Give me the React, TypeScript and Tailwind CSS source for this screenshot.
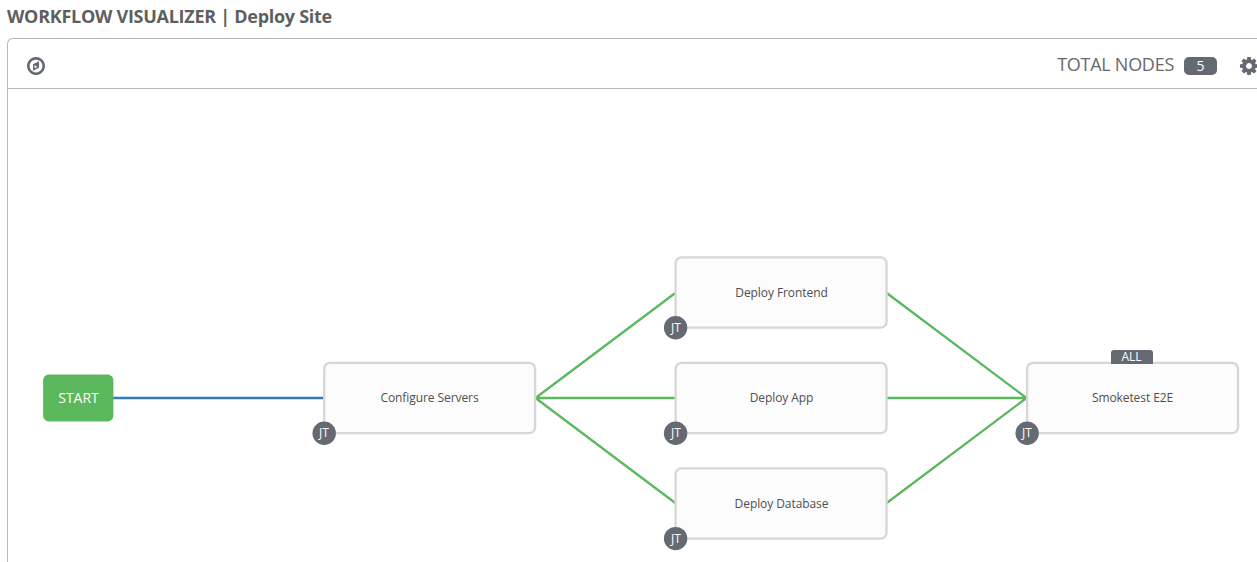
import React from "react";

type JobNode = { label: string; place: string; x: number; y: number; all?: boolean };

// x and y fine-tune the outline within its whole-pixel box
const nodes: JobNode[] = [
  { label: "Configure Servers", place: "left-[315px] top-[273px]", x: 1.2, y: 0.9 },
  { label: "Deploy Frontend", place: "left-[667px] top-[168px]", x: 0.6, y: 0.4 },
  { label: "Deploy App", place: "left-[667px] top-[273px]", x: 0.6, y: 0.9 },
  { label: "Deploy Database", place: "left-[667px] top-[379px]", x: 0.6, y: 0.3 },
  { label: "Smoketest E2E", place: "left-[1018px] top-[273px]", x: 1.1, y: 0.9, all: true },
];

function CompassIcon() {
  return (
    <svg viewBox="0 -1408 1536 1536" className="h-[18px] w-[18px]" fill="currentColor">
      <path
        transform="scale(1,-1)"
        fillRule="evenodd"
        d="M640 448l256 128l-256 128v-256zM1024 1039v-542l-512 -256v542zM1312 640q0 148 -73 273t-198 198t-273 73t-273 -73t-198 -198t-73 -273t73 -273t198 -198t273 -73t273 73t198 198t73 273zM1536 640q0 -209 -103 -385.5t-279.5 -279.5t-385.5 -103t-385.5 103t-279.5 279.5t-103 385.5t103 385.5t279.5 279.5t385.5 103t385.5 -103t279.5 -279.5t103 -385.5z"
      />
    </svg>
  );
}

function CogIcon() {
  return (
    <svg viewBox="0 -1408 1536 1536" className="h-[18px] w-[18px] shrink-0" fill="currentColor">
      <path
        transform="scale(1,-1)"
        fillRule="evenodd"
        d="M1024 640q0 106 -75 181t-181 75t-181 -75t-75 -181t75 -181t181 -75t181 75t75 181zM1536 749v-222q0 -12 -8 -23t-20 -13l-185 -28q-19 -54 -39 -91q35 -50 107 -138q10 -12 10 -25t-9 -23q-27 -37 -99 -108t-94 -71q-12 0 -26 9l-138 108q-44 -23 -91 -38q-16 -136 -29 -186q-7 -28 -36 -28h-222q-14 0 -24.5 8.5t-11.5 21.5l-28 184q-49 16 -90 37l-141 -107q-10 -9 -25 -9q-14 0 -25 11q-126 114 -165 168q-7 10 -7 23q0 12 8 23q15 21 51 66.5t54 70.5q-27 50 -41 99l-183 27q-13 2 -21 12.5t-8 23.5v222q0 12 8 23t19 13l186 28q14 46 39 92q-40 57 -107 138q-10 12 -10 24q0 10 9 23q26 36 98.5 107.5t94.5 71.5q13 0 26 -10l138 -107q44 23 91 38q16 136 29 186q7 28 36 28h222q14 0 24.5 -8.5t11.5 -21.5l28 -184q49 -16 90 -37l142 107q9 9 24 9q13 0 25 -10q129 -119 165 -170q7 -8 7 -22q0 -12 -8 -23q-15 -21 -51 -66.5t-54 -70.5q26 -50 41 -98l183 -28q13 -2 21 -12.5t8 -23.5z"
      />
    </svg>
  );
}

function Links() {
  return (
    <svg className="absolute left-0 top-0 h-full w-full" fill="none" strokeWidth="2.34">
      <path stroke="#337ab7" d="M105 309H316" />
      <path
        stroke="#5cb85c"
        d="M527.5 309L667.3 204M527.5 309H667.3M527.5 309L667.3 414M878.7 204L1018.5 309M878.7 309H1018.5M878.7 414L1018.5 309"
      />
    </svg>
  );
}

function Node({ label, place, x, y, all }: JobNode) {
  return (
    <div className={`absolute h-[72px] w-[213px] ${place}`}>
      <svg className="absolute inset-0 h-full w-full overflow-visible">
        <rect x={x} y={y} width="210.9" height="70.3" rx="5.8" fill="#fcfcfc" stroke="#d7d7d7" strokeWidth="2.34" />
        <circle cx={x} cy={y + 70.3} r="11.7" fill="#646972" />
      </svg>
      <div className="relative flex h-full items-center justify-center text-[12px] leading-[16px] tracking-[-0.08px] text-[#4f4f4f]">
        {label}
      </div>
      <div className="absolute -left-[11px] top-[59px] flex h-[24px] w-[24px] items-center justify-center text-[12px] leading-none text-white">
        JT
      </div>
      {all && (
        <div className="absolute left-[85px] -top-[12px] flex h-[14px] w-[42px] items-center justify-center rounded-t-[3px] bg-[#646972] pr-px text-[12px] leading-none text-white">
          ALL
        </div>
      )}
    </div>
  );
}

export default function App() {
  return (
    <div className="flex h-[562px] w-full flex-col overflow-hidden bg-white pl-[7px] font-['Open_Sans','Noto_Sans',sans-serif] text-[#646972]">
      <h1 className="h-[38px] shrink-0 pt-[4px] text-[18px] font-bold leading-[25px] tracking-[-0.28px] text-[#5f5f5f]">
        WORKFLOW VISUALIZER | Deploy Site
      </h1>
      <main className="flex min-h-0 flex-1 flex-col rounded-tl-[6px] border-l border-t border-[#b7b7b7]">
        <header className="flex h-[50px] shrink-0 items-center justify-between overflow-hidden border-b border-[#b7b7b7] pl-[19px] pt-[4px]">
          <CompassIcon />
          <div className="-mr-[1px] flex items-center">
            <span className="-mt-[2px] text-[18px] leading-[25px] tracking-[-0.27px] text-[#686868]">TOTAL NODES</span>
            <span className="ml-[10px] mr-[23px] flex h-[18px] w-[33px] items-center justify-center rounded-[5px] bg-[#646972] pt-px text-[14px] leading-none text-white">
              5
            </span>
            <CogIcon />
          </div>
        </header>
        <section className="relative min-h-0 flex-1 overflow-hidden">
          <Links />
          <div className="absolute left-[35px] top-[285px] flex h-[48px] w-[71px] items-center justify-center text-[14px] leading-none text-white">
            <svg className="absolute inset-0 h-full w-full">
              <rect x="0.1" y="0.5" width="70.3" height="46.9" rx="5.8" fill="#5cb85c" />
            </svg>
            <span className="relative">START</span>
          </div>
          {nodes.map((node) => (
            <Node key={node.label} {...node} />
          ))}
        </section>
      </main>
    </div>
  );
}
